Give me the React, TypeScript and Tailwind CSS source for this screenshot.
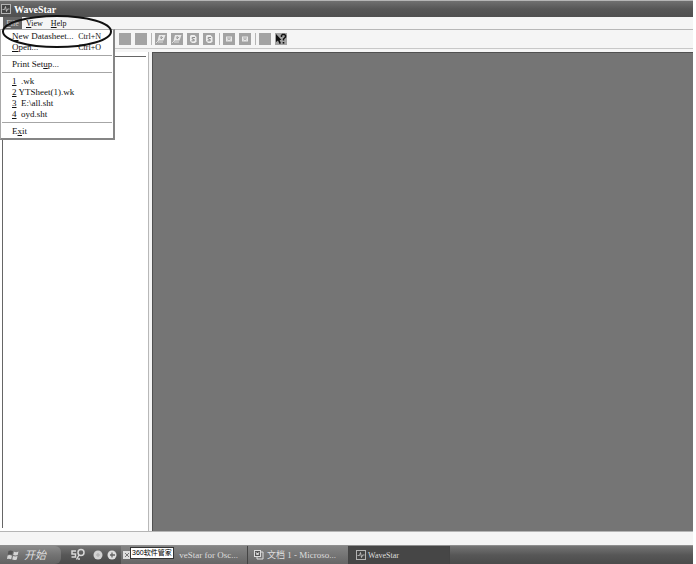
import { useState } from "react";

type MenuEntry = { before: string; key: string; after: string; shortcut?: string };

const menuGroups: MenuEntry[][] = [
  [
    { before: "", key: "N", after: "ew Datasheet...", shortcut: "Ctrl+N" },
    { before: "", key: "O", after: "pen...", shortcut: "Ctrl+O" },
  ],
  [{ before: "Print Set", key: "u", after: "p..." }],
  [
    { before: "", key: "1", after: "  .wk" },
    { before: "", key: "2", after: " YTSheet(1).wk" },
    { before: "", key: "3", after: "  E:\\all.sht" },
    { before: "", key: "4", after: "  oyd.sht" },
  ],
  [{ before: "E", key: "x", after: "it" }],
];

type ToolKind = "blank" | "sheet" | "refresh" | "window" | "help";

const toolGroups: { label: string; kind: ToolKind }[][] = [
  [
    { label: "Cut", kind: "blank" },
    { label: "Copy", kind: "blank" },
  ],
  [
    { label: "Upload sheet", kind: "sheet" },
    { label: "Download sheet", kind: "sheet" },
    { label: "Refresh", kind: "refresh" },
    { label: "Refresh all", kind: "refresh" },
  ],
  [
    { label: "Tile", kind: "window" },
    { label: "Cascade", kind: "window" },
  ],
  [
    { label: "Print", kind: "blank" },
    { label: "Context help", kind: "help" },
  ],
];

function WaveIcon() {
  return (
    <svg viewBox="0 0 10 10" className="size-[10px] shrink-0" fill="none">
      <rect x="0.5" y="0.5" width="9" height="9" fill="#444" stroke="#b4b4b4" />
      <path d="M1.5 5.5H3.5L4.5 2.5L5.5 7.5L6.5 5H8.5" stroke="#ccc" strokeWidth="0.8" />
    </svg>
  );
}

function ToolIcon({ kind }: { kind: ToolKind }) {
  return (
    <svg viewBox="0 0 12 12" className="size-3" fill="none">
      <rect width="12" height="12" fill="#a3a3a3" />
      {kind === "sheet" && (
        <>
          <path d="M4 2H10.5L8.5 7.5H2.5Z" fill="#e8e8e8" />
          <path d="M5 4.5L6.5 3.5L6 6L8 4" stroke="#8d8d8d" strokeWidth="0.8" />
          <path d="M1 10L4 7M3 9H8" stroke="#eee" strokeWidth="0.8" />
        </>
      )}
      {kind === "refresh" && (
        <>
          <path d="M4 2H7.5L9.5 4V8.5L8 10H5L3 8V3Z" fill="#eee" />
          <path d="M8 4.5H5.2V6L7.2 6.5V7.8H4.5" stroke="#8a8a8a" />
        </>
      )}
      {kind === "window" && (
        <>
          <rect x="3" y="3.5" width="6" height="5" fill="#e8e8e8" />
          <path d="M4 5H8M4.5 7L6 6L7.5 7" stroke="#999" strokeWidth="0.8" />
        </>
      )}
      {kind === "help" && (
        <>
          <path d="M1 1V9L3 7.5L4.5 11L6 10.2L4.6 7H6.5Z" fill="#111" />
          <path d="M6.5 4V2.5L7.5 1.5H9.5L10.5 2.5V4L8.5 6V7.5" stroke="#111" strokeWidth="1.5" />
          <rect x="7.7" y="9" width="1.6" height="1.6" fill="#111" />
        </>
      )}
    </svg>
  );
}

function FileMenu() {
  return (
    <div
      role="menu"
      className="absolute left-0 top-full z-10 w-[115px] border border-[#a8a8a8] border-r-2 border-r-[#858585] border-b-2 border-b-[#858585] bg-white py-px"
    >
      {menuGroups.map((group, i) => (
        <div key={i}>
          {i > 0 && <hr className="mx-px mt-[2px] mb-[3px] border-t border-[#a6a6a6]" />}
          {group.map((item) => (
            <button
              key={item.key}
              role="menuitem"
              className="flex h-[11px] w-full items-center justify-between pl-[11px] pr-3 text-left whitespace-pre"
            >
              <span>
                {item.before}
                <u>{item.key}</u>
                {item.after}
              </span>
              {item.shortcut && <span className="text-[8px]">{item.shortcut}</span>}
            </button>
          ))}
        </div>
      ))}
    </div>
  );
}

function Taskbar() {
  return (
    <footer className="flex h-[19px] shrink-0 items-stretch border-t border-[#8f8f8f] bg-linear-to-b from-[#757575] via-[#575757] to-[#4b4b4b] text-[#dedede]">
      <button className="flex w-[61px] items-center gap-[5px] rounded-r-md bg-linear-to-b from-[#8c8c8c] via-[#737373] to-[#626262] pl-[7px] font-['Liberation_Sans','Noto_Sans_CJK_SC',sans-serif] text-[11px] leading-none italic">
        <svg viewBox="0 0 12 12" className="size-3" fill="#d5d5d5">
          <path d="M1.5 2Q4 1 6 2.3L5.2 5.8Q3 4.7 0.8 5.6Z" fill="#555" />
          <path d="M7 2.7Q9 3.7 11.5 2.6L10.7 6.1Q8.5 7 6.2 6.1Z" />
          <path d="M0.6 6.5Q3 5.6 5 6.8L4.2 10.3Q2 9.2 0 10Z" />
          <path d="M6 7.1Q8.2 8 10.5 7.1L9.8 10.5Q7.5 11.5 5.2 10.6Z" />
        </svg>
        开始
      </button>
      <div className="flex items-center pl-[9px]">
        <button aria-label="Search" className="mr-[7px]">
          <svg viewBox="0 0 16 14" className="h-[14px] w-4" fill="none" stroke="#d8d8d8">
            <path d="M6 3H2V6H5.5V9H1.5" strokeWidth="1.5" />
            <circle cx="11" cy="4.5" r="3" strokeWidth="1.5" />
            <path d="M9 7L6.5 11.5M8 11H10" strokeWidth="1.5" />
          </svg>
        </button>
        <button aria-label="Browser" className="mr-1">
          <svg viewBox="0 0 10 10" className="size-[10px]">
            <circle cx="5" cy="5" r="4.5" fill="#d2d2d2" />
            <path d="M3 5H7M5 3V7" stroke="#aaa" />
          </svg>
        </button>
        <button aria-label="Security" className="mr-1">
          <svg viewBox="0 0 10 10" className="size-[10px]">
            <circle cx="5" cy="5" r="4.5" fill="#dedede" />
            <path d="M5 2.5V7.5M3 5H8" stroke="#666" strokeWidth="1.3" />
          </svg>
        </button>
      </div>
      <div className="relative flex w-[127px] items-center border-r border-[#444] bg-linear-to-b from-[#858585] to-[#666]">
        <svg viewBox="0 0 10 10" className="ml-px size-[10px]">
          <rect x="1" y="1" width="8" height="8" fill="#ddd" />
          <path d="M3 3L7 7M7 3L3 7" stroke="#777" />
        </svg>
        <button aria-label="WaveStar for Osc..." className="ml-auto pr-[9px]">
          veStar for Osc...
        </button>
        <span
          role="tooltip"
          className="absolute top-px left-[9px] border border-[#333] bg-white px-px font-['Liberation_Sans','Noto_Sans_CJK_SC',sans-serif] text-[7px] leading-[10px] whitespace-nowrap text-black"
        >
          360软件管家
        </span>
      </div>
      <button className="flex w-[101px] items-center gap-[3px] border-r border-[#444] bg-linear-to-b from-[#858585] to-[#666] pl-[6px] whitespace-nowrap">
        <svg viewBox="0 0 10 10" className="size-[10px]" fill="none">
          <path d="M3 2H9V9H3Z" fill="#777" stroke="#ddd" />
          <rect x="0.5" y="0.5" width="6" height="6" fill="#555" stroke="#ddd" />
          <path d="M2 2L3 5L3.5 3L4 5L5 2" stroke="#eee" strokeWidth="0.7" />
        </svg>
        文档 1 - Microso...
      </button>
      <button className="flex w-[101px] items-center gap-[2px] border-r border-[#444] bg-[#464646] pl-[7px] text-[8px]">
        <WaveIcon />
        WaveStar
      </button>
    </footer>
  );
}

export default function App() {
  const [menuOpen, setMenuOpen] = useState(true);

  return (
    <div className="flex h-screen flex-col bg-white pr-[3px] font-['Liberation_Serif','Noto_Sans_CJK_SC',serif] text-[9px] leading-[11px] text-[#111]">
      <header className="flex h-[17px] shrink-0 items-center gap-[3px] border-t border-[#b5b5b5] bg-linear-to-b from-[#707070] via-[#575757] to-[#505050] pl-px">
        <WaveIcon />
        <h1 className="text-[10px] font-bold text-white">WaveStar</h1>
      </header>

      <nav className="relative flex h-[13px] shrink-0 items-stretch border-b border-[#b8b8b8] bg-[#f5f5f5]">
        <button
          onClick={() => setMenuOpen(!menuOpen)}
          className="ml-[3px] w-[19px] bg-[#666] text-center text-[8px] text-[#d0d0d0]"
        >
          <u>F</u>ile
        </button>
        <button className="px-1 text-[8px]">
          <u>V</u>iew
        </button>
        <button className="px-1 text-[8px]">
          <u>H</u>elp
        </button>
        {menuOpen && <FileMenu />}
        {/* Ring round the first menu entry */}
        <svg
          viewBox="0 0 114 36"
          className="pointer-events-none absolute -top-[3px] left-0 z-20 h-9 w-[114px]"
          fill="none"
        >
          <ellipse cx="57" cy="17.5" rx="54" ry="15.5" stroke="#111" strokeWidth="2" />
        </svg>
      </nav>

      <div className="flex h-[19px] shrink-0 items-center border-b border-[#c8c8c8] bg-[#f5f5f5] pl-[115px]">
        {toolGroups.map((group, i) => (
          <div key={i} className={i > 0 ? "ml-1 flex gap-1 border-l border-[#b5b5b5] pl-[3px]" : "flex gap-1 pl-1"}>
            {group.map((tool) => (
              <button key={tool.label} aria-label={tool.label}>
                <ToolIcon kind={tool.kind} />
              </button>
            ))}
          </div>
        ))}
      </div>

      <div className="flex min-h-0 flex-1 border-b border-[#b5b5b5] bg-[#f5f5f5] pt-[3px]">
        <aside className="flex w-[149px] shrink-0 border-r border-[#b8b8b8] bg-white pt-1 pr-[2px] pb-[3px] pl-[2px]">
          <div className="flex-1 border-t border-l border-[#666]" />
        </aside>
        <main className="ml-[3px] flex-1 border-t border-l border-[#505050] bg-[#757575]" />
      </div>

      <div className="h-[13px] shrink-0 bg-[#f5f5f5]" />
      <Taskbar />
    </div>
  );
}
